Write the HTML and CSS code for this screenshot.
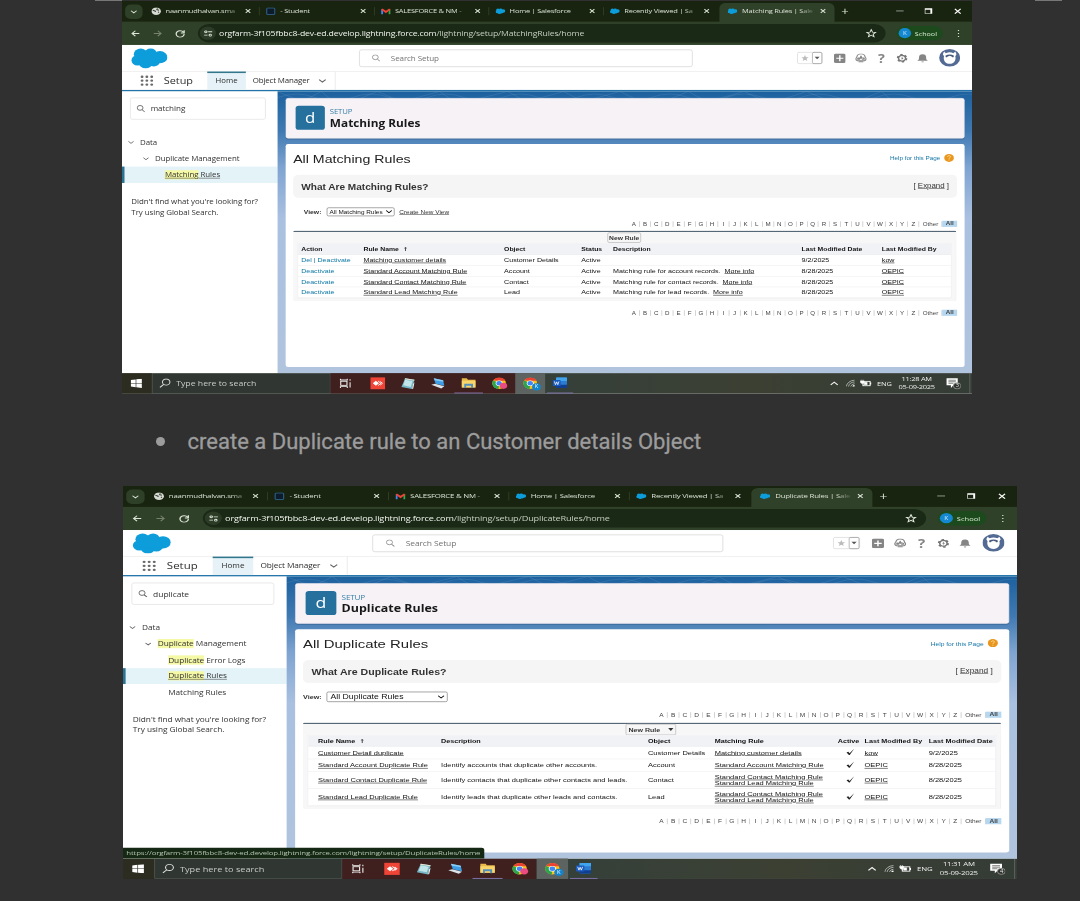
FILE: index.html
```html
<!DOCTYPE html>
<html lang="en">
<head>
<meta charset="utf-8">
<title>Duplicate rule guide</title>
<link rel="stylesheet" href="styles.css">
</head>
<body>
<svg class="defs" width="0" height="0">
  <symbol id="i-x" viewBox="0 0 12 12"><path d="M2 2l8 8M10 2l-8 8" stroke="currentColor" stroke-width="1.8"/></symbol>
  <symbol id="i-chev" viewBox="0 0 12 12"><path d="M1.5 4l4.5 4.2L10.500 4" fill="none" stroke="currentColor" stroke-width="1.7"/></symbol>
  <symbol id="i-globe" viewBox="0 0 16 16"><circle cx="8" cy="8" r="7.500" fill="#d6dad3"/><path d="M2.500 6l4 1.500v2M10 2.500L9 5l3.500 1M11 9.500l1.500 1" fill="none" stroke="#3a4535" stroke-width="1.800"/></symbol>
  <symbol id="i-sq" viewBox="0 0 16 16"><rect x="1.500" y="1.500" width="13" height="13" rx="2" fill="#0d1c2b" stroke="#2c587d" stroke-width="2"/></symbol>
  <symbol id="i-gmail" viewBox="0 0 16 14"><path d="M2 13V3" stroke="#4285f4" stroke-width="3"/><path d="M14 13V3" stroke="#34a853" stroke-width="3"/><path d="M1.500 3L8 8.500 14.500 3" fill="none" stroke="#ea4335" stroke-width="3.400"/></symbol>
  <symbol id="i-cloud" viewBox="0 0 58 40"><g fill="#0d9dda"><circle cx="15" cy="12" r="11"/><circle cx="31" cy="11" r="10"/><circle cx="46" cy="18" r="12"/><circle cx="10" cy="24" r="10"/><circle cx="23" cy="29" r="11"/><circle cx="36" cy="26" r="10"/><rect x="12" y="10" width="34" height="18"/></g></symbol>
  <symbol id="i-back" viewBox="0 0 16 16"><path d="M14 8H3M8 3L3 8l5 5" fill="none" stroke="currentColor" stroke-width="1.800"/></symbol>
  <symbol id="i-fwd" viewBox="0 0 16 16"><path d="M2 8h11M8 3l5 5-5 5" fill="none" stroke="currentColor" stroke-width="1.800"/></symbol>
  <symbol id="i-reload" viewBox="0 0 16 16"><path d="M13 5.500A6 6 0 1 0 14 9M14 2v5H9" fill="none" stroke="currentColor" stroke-width="1.900"/></symbol>
  <symbol id="i-tune" viewBox="0 0 16 16"><g fill="none" stroke="currentColor" stroke-width="1.800"><circle cx="4" cy="4.500" r="2"/><path d="M8 4.500h7M1 11.500h6"/><circle cx="11.500" cy="11.500" r="2"/></g></symbol>
  <symbol id="i-star" viewBox="0 0 18 18"><path d="M9 2l2 5 5 .4-3.900 3.300L13.400 16 9 13l-4.400 3 1.300-5.300L2 7.400 7 7z" fill="none" stroke="currentColor" stroke-width="1.700"/></symbol>
  <symbol id="i-starf" viewBox="0 0 18 18"><path d="M9 2l2 5 5 .4-3.900 3.300L13.400 16 9 13l-4.400 3 1.300-5.300L2 7.400 7 7z" fill="currentColor"/></symbol>
  <symbol id="i-mag" viewBox="0 0 16 16"><circle cx="6.500" cy="6.500" r="5" fill="none" stroke="currentColor" stroke-width="1.500"/><path d="M10 10.500l4.500 4.500" stroke="currentColor" stroke-width="1.700"/></symbol>
  <symbol id="i-mag2" viewBox="0 0 20 20"><circle cx="12" cy="7.500" r="6" fill="none" stroke="currentColor" stroke-width="1.700"/><path d="M8 12l-6 6" stroke="currentColor" stroke-width="1.800"/></symbol>
  <symbol id="i-plus" viewBox="0 0 20 20"><rect width="20" height="20" rx="3.500" fill="#858585"/><path d="M10 4v12M4 10h12" stroke="#fff" stroke-width="2.400"/></symbol>
  <symbol id="i-hat" viewBox="0 0 20 20"><path d="M4 15a4 4 0 0 1-1-7 7 7 0 0 1 14 0 4 4 0 0 1-1 7z" fill="none" stroke="#858585" stroke-width="2"/><path d="M10 4l4 7H6zM3 11l3-3 3 5H4zM17 11l-3-3-3 5h5zM6 16h8v2H6z" fill="#858585"/></symbol>
  <symbol id="i-gear" viewBox="0 0 20 20"><circle cx="10" cy="10" r="7.500" fill="none" stroke="#777" stroke-width="3" stroke-dasharray="4 3.850"/><circle cx="10" cy="10" r="6" fill="none" stroke="#777" stroke-width="2.600"/><path d="M11 6l-3 4.500h2L9 14l3.500-4.500h-2z" fill="#777"/></symbol>
  <symbol id="i-bell" viewBox="0 0 20 20"><path d="M1 15c3-2 3-4 3-7a6 6 0 0 1 12 0c0 3 0 5 3 7zM8 16.500h4a2 2 0 0 1-4 0z" fill="#858585"/></symbol>
  <symbol id="i-astro" viewBox="0 0 34 34"><circle cx="17" cy="17" r="17" fill="#536b94"/><path d="M8 5l3 3c4-2 8-2 12 0l3-3 2 5-2 4c2 7-2 15-9 15S6 21 8 14l-2-4z" fill="#fff"/><path d="M10 13c4-3 10-3 14 0l-1 3H11z" fill="#46597d"/><path d="M13 15l4-2 4 2v4h-8z" fill="#fff"/></symbol>
  <symbol id="i-waffle" viewBox="0 0 22 22"><g fill="#696969"><rect x="1" y="1" width="4.500" height="4.500" rx="2"/><rect x="8.700" y="1" width="4.500" height="4.500" rx="2"/><rect x="16.500" y="1" width="4.500" height="4.500" rx="2"/><rect x="1" y="8.700" width="4.500" height="4.500" rx="2"/><rect x="8.700" y="8.700" width="4.500" height="4.500" rx="2"/><rect x="16.500" y="8.700" width="4.500" height="4.500" rx="2"/><rect x="1" y="16.500" width="4.500" height="4.500" rx="2"/><rect x="8.700" y="16.500" width="4.500" height="4.500" rx="2"/><rect x="16.500" y="16.500" width="4.500" height="4.500" rx="2"/></g></symbol>
  <symbol id="i-help" viewBox="0 0 16 16"><circle cx="8" cy="8" r="7.800" fill="#e8961e"/><path d="M5.500 6c0-3 5-3 5-.3C10.500 7.500 8 7.500 8 9.500M8 11v2" fill="none" stroke="#ffe0a0" stroke-width="1.500"/></symbol>
  <symbol id="i-win" viewBox="0 0 18 18"><path d="M0 2.500L8 1.400V8.500H0zM9 1.200L18 0v8.500H9zM0 9.500h8v7.100L0 15.500zM9 9.500h9V18l-9-1.200z" fill="#fff"/></symbol>
  <symbol id="i-task" viewBox="0 0 20 20"><g fill="none" stroke="#f2f2f2" stroke-width="1.700"><rect x="2.500" y="6" width="10" height="8"/><path d="M2 1v2.500h11V1M2 19v-2.500h11V19"/><path d="M17.500 2v3M17.500 8v10"/></g></symbol>
  <symbol id="i-any" viewBox="0 0 24 24"><rect width="24" height="24" fill="#f04437"/><path d="M4 12l5-5 5 5-5 5z" fill="#fff"/><path d="M12.500 7.500L17 12l-4.500 4.500M16 8.500l3.500 3.500-3.500 3.500" fill="none" stroke="#fff" stroke-width="1.600"/></symbol>
  <symbol id="i-note" viewBox="0 0 24 24"><path d="M7 2l15 3-4 18-17-4z" fill="#74b7c6"/><path d="M7 5l12 3-3 11-12-3z" fill="#c1e5e8"/><path d="M7 2l15 3-.5 2L6 4z" fill="#e7e0cc"/><path d="M18 23l2-10 2-3-2 12z" fill="#f8f8f8"/></symbol>
  <symbol id="i-pc" viewBox="0 0 24 24"><path d="M5 2l15 4 2 11-14-4z" fill="#3b9ee6"/><path d="M5 2l15 4 .5 3-14-3z" fill="#8bcdf5"/><path d="M1 15l6-2 15 5-5 4z" fill="#dce3e9"/></symbol>
  <symbol id="i-folder" viewBox="0 0 24 24"><path d="M1 3h8l2 3h12v15H1z" fill="#e9b949"/><path d="M1 8h22v13H1z" fill="#f8d66c"/><path d="M5 14h14v8h-3v-4H8v4H5z" fill="#5590bd"/></symbol>
  <symbol id="i-chrome" viewBox="0 0 24 24"><circle cx="12" cy="12" r="11" fill="#fbc116"/><path d="M12 12l-1 11A11 11 0 0 1 2.500 6.500z" fill="#2da44f"/><path d="M2.500 6.500A11 11 0 0 1 22 7H12z" fill="#ea4335"/><circle cx="12" cy="12" r="5.500" fill="#fff"/><circle cx="12" cy="12" r="4.300" fill="#4285f4"/></symbol>
  <symbol id="i-word" viewBox="0 0 26 24"><rect x="6" y="1" width="19" height="22" rx="2" fill="#2b7cd3"/><path d="M6 1h19v7H6z" fill="#41a5ee"/><path d="M6 16h19v7H6z" fill="#103f91"/><rect x="0" y="6" width="14" height="13" rx="1.500" fill="#185abd"/><path d="M3 9l2 7 2-6 2 6 2-7" fill="none" stroke="#fff" stroke-width="1.500"/></symbol>
  <symbol id="i-wifi" viewBox="0 0 18 18"><g fill="none" stroke="#c9cdc8" stroke-width="1.500"><path d="M1 16A16 16 0 0 1 16 2M5 16A12 12 0 0 1 16 6M9 16a8 8 0 0 1 7-6"/></g><path d="M12 16a4 4 0 0 1 4-3v3z" fill="#fff"/></symbol>
  <symbol id="i-batt" viewBox="0 0 20 16"><rect x="5" y="4" width="12" height="9" fill="none" stroke="#fff" stroke-width="1.700"/><path d="M18 6.500v4" stroke="#fff" stroke-width="2"/><path d="M7 6h5v5H7zM0 3h7v4L4 9 1 7zM2 0v3M5 0v3" fill="#fff" stroke="#fff"/></symbol>
  <symbol id="i-msg" viewBox="0 0 24 24"><path d="M1 2h18v14h-7l-4 5v-5H1z" fill="#fff"/><path d="M4 6h12M4 9h12M4 12h8" stroke="#4a4f49" stroke-width="1.200"/><circle cx="18" cy="17" r="6" fill="#30342f" stroke="#aaa" stroke-width="1.200"/></symbol>
  <symbol id="i-check" viewBox="0 0 16 16"><path d="M1.500 9.500l3-1.500L6.500 11 14 1.500 6.800 14.500H5.500z" fill="#222"/></symbol>
  <symbol id="waves" viewBox="0 0 1116 100"><g fill="none" stroke="#fff" stroke-opacity=".1" stroke-width="1.500"><path d="M0 12q30-14 60 0t60 0 60 0 60 0 60 0 60 0 60 0 60 0 60 0 60 0 60 0 60 0 60 0 60 0 60 0 60 0 60 0 60 0 60 0"/><path d="M0 0l40 20 30-20 30 30 60-30 40 20 60-20 30 24 80-24 30 20 60-20 30 20 60-20 50 30 60-30 30 20 60-20 40 24 60-24 60 30 60-30 80 80"/></g></symbol>
</svg>

<main class="page">
  <div class="rules"><span></span><span></span></div>

  <section class="shot first"><div class="desk">
    <div class="tabs">
      <div class="tabsearch"><svg><use href="#i-chev"/></svg></div>
      <div class="tab"><svg class="fav"><use href="#i-globe"/></svg><span>naanmudhalvan.sma</span><svg class="close"><use href="#i-x"/></svg></div>
      <div class="tab"><svg class="fav"><use href="#i-sq"/></svg><span>- Student</span><svg class="close"><use href="#i-x"/></svg></div>
      <div class="tab"><svg class="fav"><use href="#i-gmail"/></svg><span>SALESFORCE &amp; NM -</span><svg class="close"><use href="#i-x"/></svg></div>
      <div class="tab"><svg class="fav"><use href="#i-cloud"/></svg><span>Home | Salesforce</span><svg class="close"><use href="#i-x"/></svg></div>
      <div class="tab"><svg class="fav"><use href="#i-cloud"/></svg><span>Recently Viewed | Sa</span><svg class="close"><use href="#i-x"/></svg></div>
      <div class="tab active"><svg class="fav"><use href="#i-cloud"/></svg><span>Matching Rules | Sale</span><svg class="close"><use href="#i-x"/></svg></div>
      <div class="newtab">+</div>
      <div class="winbtns"><i class="min"></i><i class="restore"></i><svg><use href="#i-x"/></svg></div>
    </div>
    <div class="toolbar">
      <svg class="tb"><use href="#i-back"/></svg><svg class="tb dim"><use href="#i-fwd"/></svg><svg class="tb"><use href="#i-reload"/></svg>
      <div class="omni"><b><svg><use href="#i-tune"/></svg></b><span class="url">orgfarm-3f105fbbc8-dev-ed.develop.lightning.force.com<em>/lightning/setup/MatchingRules/home</em></span><svg class="bm"><use href="#i-star"/></svg></div>
      <div class="school"><i>K</i>School</div><div class="dots">⋮</div>
    </div>
    <div class="sfhead">
      <svg class="logo"><use href="#i-cloud"/></svg>
      <div class="gsearch"><svg><use href="#i-mag"/></svg>Search Setup</div>
      <div class="icons"><div class="favs"><svg><use href="#i-starf"/></svg><i></i></div><svg><use href="#i-plus"/></svg><svg><use href="#i-hat"/></svg><span class="q">?</span><svg><use href="#i-gear"/></svg><svg><use href="#i-bell"/></svg><svg class="astro"><use href="#i-astro"/></svg></div>
    </div>
    <div class="sfnav"><svg class="waffle"><use href="#i-waffle"/></svg><span class="setup">Setup</span><span class="home">Home</span><span class="om">Object Manager<svg><use href="#i-chev"/></svg></span></div>
    <div class="content">
      <aside>
        <div class="qf"><svg><use href="#i-mag"/></svg>matching</div>
        <div class="row l0"><svg><use href="#i-chev"/></svg>Data</div>
        <div class="row l1"><svg><use href="#i-chev"/></svg>Duplicate Management</div>
        <div class="row l2 sel"><u><mark>Matching</mark> Rules</u></div>
        <p>Didn't find what you're looking for?<br>Try using Global Search.</p>
      </aside>
      <div class="stage"><svg class="waves" preserveAspectRatio="none"><use href="#waves"/></svg>
        <header class="card head"><div class="dicon">d</div><div><small>SETUP</small><h1>Matching Rules</h1></div></header>
        <article class="card body">
          <div class="titlebar"><h2>All Matching Rules</h2><div class="help">Help for this Page<svg><use href="#i-help"/></svg></div></div>
          <div class="what"><b>What Are Matching Rules?</b><span>[ <u>Expand</u> ]</span></div>
          <div class="view v1"><b>View:</b><span class="select">All Matching Rules<svg><use href="#i-chev"/></svg></span><u>Create New View</u></div>
          <div class="az"><i>A</i><i>B</i><i>C</i><i>D</i><i>E</i><i>F</i><i>G</i><i>H</i><i>I</i><i>J</i><i>K</i><i>L</i><i>M</i><i>N</i><i>O</i><i>P</i><i>Q</i><i>R</i><i>S</i><i>T</i><i>U</i><i>V</i><i>W</i><i>X</i><i>Y</i><i>Z</i><i class="other">Other</i><b>All</b></div>
          <div class="list t1">
            <div class="actions"><span class="btn">New Rule</span></div>
            <div class="grid">
              <div class="tr th"><span>Action</span><span>Rule Name &nbsp;<b class="up-arrow">↑</b></span><span>Object</span><span>Status</span><span>Description</span><span>Last Modified Date</span><span>Last Modified By</span></div>
              <div class="tr"><span class="act">Del | Deactivate</span><span><u>Matching customer details</u></span><span>Customer Details</span><span>Active</span><span></span><span>9/2/2025</span><span><u>kow</u></span></div>
              <div class="tr"><span class="act">Deactivate</span><span><u>Standard Account Matching Rule</u></span><span>Account</span><span>Active</span><span>Matching rule for account records. &nbsp;<u>More info</u></span><span>8/28/2025</span><span><u>OEPIC</u></span></div>
              <div class="tr"><span class="act">Deactivate</span><span><u>Standard Contact Matching Rule</u></span><span>Contact</span><span>Active</span><span>Matching rule for contact records. &nbsp;<u>More info</u></span><span>8/28/2025</span><span><u>OEPIC</u></span></div>
              <div class="tr"><span class="act">Deactivate</span><span><u>Standard Lead Matching Rule</u></span><span>Lead</span><span>Active</span><span>Matching rule for lead records. &nbsp;<u>More info</u></span><span>8/28/2025</span><span><u>OEPIC</u></span></div>
            </div>
          </div>
          <div class="az"><i>A</i><i>B</i><i>C</i><i>D</i><i>E</i><i>F</i><i>G</i><i>H</i><i>I</i><i>J</i><i>K</i><i>L</i><i>M</i><i>N</i><i>O</i><i>P</i><i>Q</i><i>R</i><i>S</i><i>T</i><i>U</i><i>V</i><i>W</i><i>X</i><i>Y</i><i>Z</i><i class="other">Other</i><b>All</b></div>
        </article>
      </div>
    </div>
    <footer class="taskbar">
      <div class="start"><svg><use href="#i-win"/></svg></div><div class="tsearch"><svg><use href="#i-mag2"/></svg>Type here to search</div>
      <div class="apps"><svg class="tv"><use href="#i-task"/></svg><svg><use href="#i-any"/></svg><svg><use href="#i-note"/></svg><svg><use href="#i-pc"/></svg><span class="open"><svg><use href="#i-folder"/></svg></span><span class="profile pink"><svg><use href="#i-chrome"/></svg><i></i></span></div>
      <div class="app on profile"><svg><use href="#i-chrome"/></svg><i>K</i></div><div class="app open word"><svg><use href="#i-word"/></svg></div>
      <div class="tray"><svg class="up"><use href="#i-chev"/></svg><svg><use href="#i-wifi"/></svg><svg class="bat"><use href="#i-batt"/></svg><span>ENG</span><time>11:28 AM<br>05-09-2025</time><span class="msg"><svg><use href="#i-msg"/></svg><i>3</i></span></div>
    </footer>
  </div></section>

  <ul class="step"><li>create a Duplicate rule to an Customer details Object</li></ul>

  <section class="shot second"><div class="desk">
    <div class="tabs">
      <div class="tabsearch"><svg><use href="#i-chev"/></svg></div>
      <div class="tab"><svg class="fav"><use href="#i-globe"/></svg><span>naanmudhalvan.sma</span><svg class="close"><use href="#i-x"/></svg></div>
      <div class="tab"><svg class="fav"><use href="#i-sq"/></svg><span>- Student</span><svg class="close"><use href="#i-x"/></svg></div>
      <div class="tab"><svg class="fav"><use href="#i-gmail"/></svg><span>SALESFORCE &amp; NM -</span><svg class="close"><use href="#i-x"/></svg></div>
      <div class="tab"><svg class="fav"><use href="#i-cloud"/></svg><span>Home | Salesforce</span><svg class="close"><use href="#i-x"/></svg></div>
      <div class="tab"><svg class="fav"><use href="#i-cloud"/></svg><span>Recently Viewed | Sa</span><svg class="close"><use href="#i-x"/></svg></div>
      <div class="tab active"><svg class="fav"><use href="#i-cloud"/></svg><span>Duplicate Rules | Sale</span><svg class="close"><use href="#i-x"/></svg></div>
      <div class="newtab">+</div>
      <div class="winbtns"><i class="min"></i><i class="restore"></i><svg><use href="#i-x"/></svg></div>
    </div>
    <div class="toolbar">
      <svg class="tb"><use href="#i-back"/></svg><svg class="tb dim"><use href="#i-fwd"/></svg><svg class="tb"><use href="#i-reload"/></svg>
      <div class="omni"><b><svg><use href="#i-tune"/></svg></b><span class="url">orgfarm-3f105fbbc8-dev-ed.develop.lightning.force.com<em>/lightning/setup/DuplicateRules/home</em></span><svg class="bm"><use href="#i-star"/></svg></div>
      <div class="school"><i>K</i>School</div><div class="dots">⋮</div>
    </div>
    <div class="sfhead">
      <svg class="logo"><use href="#i-cloud"/></svg>
      <div class="gsearch"><svg><use href="#i-mag"/></svg>Search Setup</div>
      <div class="icons"><div class="favs"><svg><use href="#i-starf"/></svg><i></i></div><svg><use href="#i-plus"/></svg><svg><use href="#i-hat"/></svg><span class="q">?</span><svg><use href="#i-gear"/></svg><svg><use href="#i-bell"/></svg><svg class="astro"><use href="#i-astro"/></svg></div>
    </div>
    <div class="sfnav"><svg class="waffle"><use href="#i-waffle"/></svg><span class="setup">Setup</span><span class="home">Home</span><span class="om">Object Manager<svg><use href="#i-chev"/></svg></span></div>
    <div class="content">
      <aside>
        <div class="qf"><svg><use href="#i-mag"/></svg>duplicate</div>
        <div class="row l0"><svg><use href="#i-chev"/></svg>Data</div>
        <div class="row l1"><svg><use href="#i-chev"/></svg><span><mark>Duplicate</mark> Management</span></div>
        <div class="row l2"><span><mark>Duplicate</mark> Error Logs</span></div>
        <div class="row l2 sel"><u><mark>Duplicate</mark> Rules</u></div>
        <div class="row l2">Matching Rules</div>
        <p>Didn't find what you're looking for?<br>Try using Global Search.</p>
      </aside>
      <div class="stage"><svg class="waves" preserveAspectRatio="none"><use href="#waves"/></svg>
        <header class="card head"><div class="dicon">d</div><div><small>SETUP</small><h1>Duplicate Rules</h1></div></header>
        <article class="card body">
          <div class="titlebar"><h2>All Duplicate Rules</h2><div class="help">Help for this Page<svg><use href="#i-help"/></svg></div></div>
          <div class="what"><b>What Are Duplicate Rules?</b><span>[ <u>Expand</u> ]</span></div>
          <div class="view v2"><b>View:</b><span class="select">All Duplicate Rules<svg><use href="#i-chev"/></svg></span></div>
          <div class="az"><i>A</i><i>B</i><i>C</i><i>D</i><i>E</i><i>F</i><i>G</i><i>H</i><i>I</i><i>J</i><i>K</i><i>L</i><i>M</i><i>N</i><i>O</i><i>P</i><i>Q</i><i>R</i><i>S</i><i>T</i><i>U</i><i>V</i><i>W</i><i>X</i><i>Y</i><i>Z</i><i class="other">Other</i><b>All</b></div>
          <div class="list t2">
            <div class="actions"><span class="btn">New Rule<s></s></span></div>
            <div class="grid">
              <div class="tr th"><span>Rule Name &nbsp;<b class="up-arrow">↑</b></span><span>Description</span><span>Object</span><span>Matching Rule</span><span>Active</span><span>Last Modified By</span><span>Last Modified Date</span></div>
              <div class="tr"><span><u>Customer Detail duplicate</u></span><span></span><span>Customer Details</span><span><u>Matching customer details</u></span><svg><use href="#i-check"/></svg><span><u>kow</u></span><span>9/2/2025</span></div>
              <div class="tr"><span><u>Standard Account Duplicate Rule</u></span><span>Identify accounts that duplicate other accounts.</span><span>Account</span><span><u>Standard Account Matching Rule</u></span><svg><use href="#i-check"/></svg><span><u>OEPIC</u></span><span>8/28/2025</span></div>
              <div class="tr tall"><span><u>Standard Contact Duplicate Rule</u></span><span>Identify contacts that duplicate other contacts and leads.</span><span>Contact</span><span><u>Standard Contact Matching Rule</u><br><u>Standard Lead Matching Rule</u></span><svg><use href="#i-check"/></svg><span><u>OEPIC</u></span><span>8/28/2025</span></div>
              <div class="tr tall"><span><u>Standard Lead Duplicate Rule</u></span><span>Identify leads that duplicate other leads and contacts.</span><span>Lead</span><span><u>Standard Contact Matching Rule</u><br><u>Standard Lead Matching Rule</u></span><svg><use href="#i-check"/></svg><span><u>OEPIC</u></span><span>8/28/2025</span></div>
            </div>
          </div>
          <div class="az"><i>A</i><i>B</i><i>C</i><i>D</i><i>E</i><i>F</i><i>G</i><i>H</i><i>I</i><i>J</i><i>K</i><i>L</i><i>M</i><i>N</i><i>O</i><i>P</i><i>Q</i><i>R</i><i>S</i><i>T</i><i>U</i><i>V</i><i>W</i><i>X</i><i>Y</i><i>Z</i><i class="other">Other</i><b>All</b></div>
        </article>
      </div>
      <div class="status">https://orgfarm-3f105fbbc8-dev-ed.develop.lightning.force.com/lightning/setup/DuplicateRules/home</div>
    </div>
    <footer class="taskbar">
      <div class="start"><svg><use href="#i-win"/></svg></div><div class="tsearch"><svg><use href="#i-mag2"/></svg>Type here to search</div>
      <div class="apps"><svg class="tv"><use href="#i-task"/></svg><svg><use href="#i-any"/></svg><svg><use href="#i-note"/></svg><svg><use href="#i-pc"/></svg><span class="open"><svg><use href="#i-folder"/></svg></span><span class="profile pink"><svg><use href="#i-chrome"/></svg><i></i></span></div>
      <div class="app on profile"><svg><use href="#i-chrome"/></svg><i>K</i></div><div class="app open word"><svg><use href="#i-word"/></svg></div>
      <div class="tray"><svg class="up"><use href="#i-chev"/></svg><svg><use href="#i-wifi"/></svg><svg class="bat"><use href="#i-batt"/></svg><span>ENG</span><time>11:31 AM<br>05-09-2025</time><span class="msg"><svg><use href="#i-msg"/></svg><i>4</i></span></div>
    </footer>
  </div></section>
</main>
</body>
</html>
```

FILE: styles.css
```css
* { box-sizing: border-box; }
body { margin: 0; background: #303030; overflow: hidden; }
.defs { display: block; height: 0; }
i, em { font-style: normal; }
svg { flex: none; }
.page { height: 901px; display: flex; flex-direction: column; }
.rules { height: 1px; display: flex; justify-content: space-between; padding: 0 18px 0 95px; flex: none; }
.rules span { width: 27px; background: #777; }

/* Each capture is a 1366x768 desktop squeezed into its slot. */
.shot { overflow: hidden; flex: none; height: 393px; }
.first { width: 850px; margin-left: 122px; height: 392.500px; }
.second { width: 894px; margin-left: 123px; margin-top: 0; }
.desk { width: 1366px; height: 768px; display: flex; flex-direction: column; transform-origin: 0 0; font-family: "Open Sans", "Noto Sans", sans-serif; background: #fff; }
.first .desk { transform: scale(.6223, .5111); }
.second .desk { transform: scale(.6545, .5117); }

.step { list-style: none; margin: 0; padding: 0 0 0 156px; height: 92.500px; display: flex; align-items: center; flex: none; font: 400 22.020px Roboto, sans-serif; color: #9c9c9c; -webkit-text-stroke: .3px #9c9c9c; }
.step li { display: flex; align-items: center; gap: 22.500px; padding-top: 3px; white-space: nowrap; }
.step li::before { content: ""; width: 9px; height: 9px; border-radius: 50%; background: #9c9c9c; }

.tabs { height: 41px; background: #18240f; display: flex; align-items: center; padding-left: 5px; color: #dbe2d6; flex: none; }
.tabsearch { width: 28px; height: 28px; border-radius: 9px; background: #2f4028; display: grid; place-items: center; margin-right: 4px; }
.tabsearch svg { width: 12px; height: 12px; }
.tab { width: 184.300px; height: 34px; margin-top: 4px; display: flex; align-items: center; padding: 0 13px 6px 10px; font-size: 12px; letter-spacing: -.35px; position: relative; }
.tab .fav { width: 16px; height: 16px; margin-right: 7px; }
.tab span { width: 122px; white-space: nowrap; -webkit-mask-image: linear-gradient(90deg, #000 78%, transparent); mask-image: linear-gradient(90deg, #000 78%, transparent); }
.close { width: 11px; height: 11px; margin-left: auto; }
.tab + .tab:not(.active)::before { content: ""; position: absolute; left: -1px; width: 1px; height: 16px; background: #3c4b33; }
.tab.active { background: #2f4128; border-radius: 10px 10px 0 0; height: 37px; padding-bottom: 6px; padding-left: 13px; margin-left: 2px; }
.tab.active span { width: 119px; }
.newtab { font-size: 21px; width: 34px; text-align: center; padding-bottom: 2px; }
.winbtns { margin-left: auto; display: flex; align-items: center; gap: 34px; padding: 0 16px 2px 0; }
.min { width: 12px; height: 1.500px; background: #fff; }
.restore { width: 12px; height: 11px; border: 1.500px solid #fff; border-top-width: 3px; border-right-width: 3px; }
.winbtns svg { width: 14px; height: 14px; color: #fff; }

.toolbar { height: 45px; background: #2f4128; display: flex; align-items: center; color: #dde4d8; flex: none; padding: 0 0 1px 13px; }
.tb { width: 17px; height: 17px; margin-right: 19px; }
.dim { opacity: .4; }
.omni { width: 1105px; height: 36px; border-radius: 18px; background: #1a2816; display: flex; align-items: center; margin-left: 1px; padding: 0 14px 0 3px; font-size: 14px; }
.omni b { width: 26px; height: 26px; border-radius: 50%; background: #2b3b26; display: grid; place-items: center; margin-right: 5px; }
.omni b svg { width: 15px; height: 15px; }
.url { color: #f2f5ef; white-space: nowrap; letter-spacing: -.28px; }
.url em { color: #c4cdbf; }
.bm { width: 18px; height: 18px; margin-left: auto; }
.school { width: 74px; height: 28px; margin-left: 18px; border-radius: 14px; background: #1d4a1c; display: flex; align-items: center; gap: 6px; padding-left: 3px; font-size: 11.500px; color: #d9ecd4; }
.school i { width: 20px; height: 20px; border-radius: 50%; background: #1488d0; display: grid; place-items: center; color: #cfeaff; font-size: 10px; }
.dots { width: 12px; margin-left: 17px; font-size: 18px; text-align: center; }

.sfhead { height: 52px; display: flex; align-items: center; padding: 0 20px 0 15px; flex: none; border-bottom: 1px solid #e3e3e3; }
.logo { width: 58px; height: 40px; }
.gsearch { width: 536px; height: 34px; margin-left: 308px; border: 1.500px solid #c9c9c9; border-radius: 4px; display: flex; align-items: center; gap: 16px; padding-left: 19px; font-size: 13px; color: #747474; letter-spacing: -.2px; }
.gsearch svg { width: 15px; height: 15px; color: #888; }
.icons { margin-left: auto; display: flex; align-items: center; gap: 14.600px; }
.icons > svg { width: 19px; height: 20px; }
.icons > svg.astro { width: 34px; height: 36px; margin: 0 -1px 2px 2px; }
.favs { display: flex; border: 1.500px solid #cfcfcf; border-radius: 3px; width: 41px; height: 23px; align-items: center; margin-right: 3px; }
.favs svg { width: 15px; height: 15px; margin: 0 4px; color: #bbb; }
.favs i { height: 23px; flex: 1; border: 1.500px solid #888; border-radius: 3px; display: grid; place-items: center; }
.favs i::after { content: ""; border: 4px solid transparent; border-top: 5px solid #555; border-bottom: 0; }
.q { width: 18px; font: 700 23px "Open Sans", sans-serif; text-align: center; color: #858585; margin: 0; }

.sfnav { height: 39px; display: flex; align-items: stretch; border-bottom: 3px solid #2273a8; padding: 0 0 0 29px; flex: none; font-size: 13px; color: #2d2d2d; }
.waffle { width: 22px; height: 22px; align-self: center; }
.setup { font-size: 17.500px; width: 86px; padding-left: 16px; align-self: center; line-height: 20px; }
.home { width: 62px; background: #e6f2f7; border-top: 3px solid #33778d; display: flex; align-items: center; justify-content: center; font-size: 12.500px; padding-bottom: 2px; }
.om { width: 144px; border-right: 1px solid #e0e0e0; display: flex; align-items: center; padding-left: 11px; gap: 13px; font-size: 12.700px; white-space: nowrap; letter-spacing: -.2px; }
.om svg { width: 14px; height: 14px; color: #666; }

.content { display: flex; height: 551px; position: relative; flex: none; }
aside { width: 250px; flex: none; background: #fff; font-size: 12.700px; color: #333; padding-top: 12px; }
.qf { width: 218px; height: 43px; margin: 0 0 29px 13px; border: 1px solid #d9d9d9; border-radius: 4px; display: flex; align-items: center; gap: 8px; padding-left: 9px; font-size: 13px; letter-spacing: -.1px; }
.qf svg { width: 15px; height: 15px; color: #555; }
.row { height: 31.500px; display: flex; align-items: center; white-space: nowrap; letter-spacing: -.1px; }
.row svg { width: 11px; height: 11px; margin-right: 9px; color: #666; }
.l0 { padding-left: 9px; } .l1 { padding-left: 33px; } .l2 { padding-left: 69px; }
.sel { background: #e3f3f8; border-left: 4px solid #2b7192; padding-left: 65px; }
mark { background: #f5f9a5; color: inherit; }
aside p { margin: 27px 0 0 15px; line-height: 20px; white-space: nowrap; letter-spacing: -.08px; }
.stage { width: 1116px; flex: none; padding: 13px 12px 0 13px; background: linear-gradient(#1c619f, #3f79b2 14%, #7fa4d1 27%, #a9c0e0 45%, #b0c4de); position: relative; }
.waves { position: absolute; left: 0; top: 0; width: 1116px; height: 100px; }
.card { background: #fff; border-radius: 4px; position: relative; width: 1091px; }
.head { height: 79px; background: #f7f2f6; display: flex; align-items: center; gap: 8px; padding: 0 0 2px 15px; box-shadow: 0 2px 1px #345f88aa; border: 1px solid #ece9f0; }
.dicon { width: 47px; height: 47px; border-radius: 5px; background: #26709e; color: #fff; font-size: 27px; display: grid; place-items: center; line-height: 30px; }
.head small { display: block; font-size: 12.500px; color: #3980a8; line-height: 19px; letter-spacing: -.3px; padding-top: 2px; }
h1 { margin: 0; font-size: 19px; line-height: 25px; color: #181818; }
.body { margin-top: 11px; height: 436px; padding: 15px 12px 0; font-family: "Liberation Sans", Arial, sans-serif; font-size: 11.450px; color: #111; }
.titlebar { display: flex; justify-content: space-between; align-items: center; height: 28px; padding-right: 5px; }
h2 { font-weight: 400; font-size: 22.800px; margin: 0; color: #222; }
.help { display: flex; align-items: center; gap: 6px; font-size: 10.200px; color: #1676a8; padding-bottom: 2px; }
.help svg { width: 16px; height: 16px; margin-bottom: 3px; }
.what { margin-top: 17px; height: 45px; border-radius: 9px; background: #f5f5f5; display: flex; justify-content: space-between; align-items: center; padding: 0 13px 0 13px; font-size: 16.200px; color: #333; }
.what b { padding-top: 1px; }
.what span { font-size: 12.700px; padding-bottom: 4px; }
.view { display: flex; align-items: center; color: #333; }
.view b { font-size: 11px; }
.select { border: 1.500px solid #666; border-radius: 3px; display: flex; justify-content: space-between; align-items: center; color: #111; white-space: nowrap; }
.select svg { width: 12px; height: 12px; color: #000; }
.v1 { padding-left: 17px; height: 54px; }
.v1 .select { width: 109px; height: 17px; margin: 0 8px 0 8px; padding: 0 2px 0 4px; font-size: 10.300px; }
.v1 > u { font-size: 10.400px; }
.v2 { height: 54px; font-size: 13.300px; }
.v2 b { width: 36px; }
.v2 .select { width: 185px; height: 20px; padding: 0 3px 0 5px; }
.az { display: flex; justify-content: space-between; width: 528px; margin-left: auto; font-size: 10px; color: #444; height: 20px; align-items: center; }
.az i { flex: 1; text-align: center; border-right: 1px solid #bbb; line-height: 11px; }
.az .other { flex: none; width: 37px; }
.az b { width: 24px; background: #b5d7ef; text-align: center; line-height: 12px; }
.list { border-top: 3px solid #566777; background: #f7f7f8; padding: 0 7px 5px; border-radius: 3px; border-right: 1px solid #e6e6e8; }
.btn { border: 1.500px solid #aaa; border-radius: 3px; background: #f6f6f6; font-weight: 700; font-size: 10.800px; color: #333; display: flex; align-items: center; justify-content: center; white-space: nowrap; }
.btn s { border: 4px solid transparent; border-top: 6px solid #333; border-bottom: 0; margin-left: 12px; }
.grid { background: #fff; border: 1px solid #ececef; }
.tr { display: grid; align-items: center; border-bottom: 1px solid #ececec; white-space: nowrap; }
.th { background: #f0f2f6; font-weight: 700; font-size: 11px; }
.up-arrow { font-family: "DejaVu Sans", sans-serif; font-size: 10px; line-height: 10px; }
.tr .act { color: #0d77a6; }
.v1 + .az { margin-top: -13px; }
.t1 { margin-top: 3px; width: 1066px; }
.t1 .actions { height: 22px; padding-left: 498px; padding-top: 1px; }
.t1 .btn { width: 54px; height: 20px; }
.t1 .tr { height: 21px; grid-template-columns: 100px 226px 124px 51px 303px 129px 1fr; padding-left: 5px; }
.t1 .th { height: 22px; }
.t1 .act { font-size: 11.300px; }
.t1 + .az { margin-top: 13px; }
.v2 + .az { margin-top: -2px; }
.t2 { margin-top: 5px; }
.t2 .actions { height: 22px; padding-left: 486px; }
.t2 .btn { width: 77px; height: 22px; }
.t2 .tr { height: 25px; grid-template-columns: 188px 316px 102px 188px 41px 98px 1fr; padding-left: 15px; }
.t2 .th { height: 21px; }
.t2 .tr.tall { height: 33px; line-height: 12.500px; }
.t2 .tr svg { width: 17px; height: 15px; margin: 0 0 3px 11px; }
.t2 + .az { margin-top: 14px; }
.status { position: absolute; left: 0; bottom: 0; width: 552px; height: 21px; background: #152813; color: #b4c4af; font-size: 12px; line-height: 19px; padding-left: 5px; white-space: nowrap; border-radius: 0 4px 0 0; letter-spacing: -.26px; }

.taskbar { height: 40px; display: flex; background: linear-gradient(90deg, #30362a, #35403a 50%, #3c4033 74%, #343c36); color: #eee; flex: none; }
.start { width: 48px; padding-right: 2px; display: grid; place-items: center; background: #2c2c20; }
.start svg { width: 18px; height: 18px; }
.tsearch { width: 287px; background: #303632; border: 1px solid #596159; display: flex; align-items: center; gap: 8px; padding-left: 10px; font-size: 14px; color: #c8ccc8; }
.tsearch svg { width: 20px; height: 20px; color: #ddd; }
.apps { width: 297px; background: #40201e; display: flex; align-items: center; justify-content: space-between; padding: 0 14px 0 14px; }
.apps svg, .app svg { width: 24px; height: 24px; }
.apps .tv { width: 20px; height: 20px; margin-right: 5px; }
.app { width: 48px; display: grid; place-items: center; }
.on { background: #5d6360; }
.open { align-self: stretch; display: grid; place-items: center; border-bottom: 2px solid #7b6ea2; width: 46px; margin: 0 -11px; }
.app.open { margin: 0 0 0 3px; width: 42px; }
.profile { position: relative; }
.profile i { position: absolute; right: 7px; bottom: 6px; width: 14px; height: 14px; border-radius: 50%; background: #1285cd; color: #fff; font-size: 9px; line-height: 14px; text-align: center; }
.profile.pink { display: grid; }
.pink i { right: -1px; bottom: 1px; width: 12px; height: 12px; background: #ea4b80; }
.tray { margin-left: auto; display: flex; align-items: center; font-size: 12px; padding-right: 14px; border-right: 1px solid #777; margin-right: 3px; }
.tray svg { width: 16px; height: 16px; margin-right: 7px; }
.tray .up { width: 15px; height: 15px; transform: scaleY(-1); margin-right: 11px; }
.tray .bat { width: 19px; margin-right: 8px; }
.tray time { font-size: 12px; line-height: 17px; text-align: center; width: 62px; margin: 0 22px 0 9px; letter-spacing: -.45px; white-space: nowrap; padding-bottom: 2px; }
.tray > span:not(.msg) { letter-spacing: -.2px; }
.msg { position: relative; width: 24px; height: 24px; margin-left: -6px; }
.msg svg { width: 24px; height: 24px; margin: 0; }
.msg i { position: absolute; right: 3px; bottom: 1px; font-size: 9px; line-height: 12px; }
```
